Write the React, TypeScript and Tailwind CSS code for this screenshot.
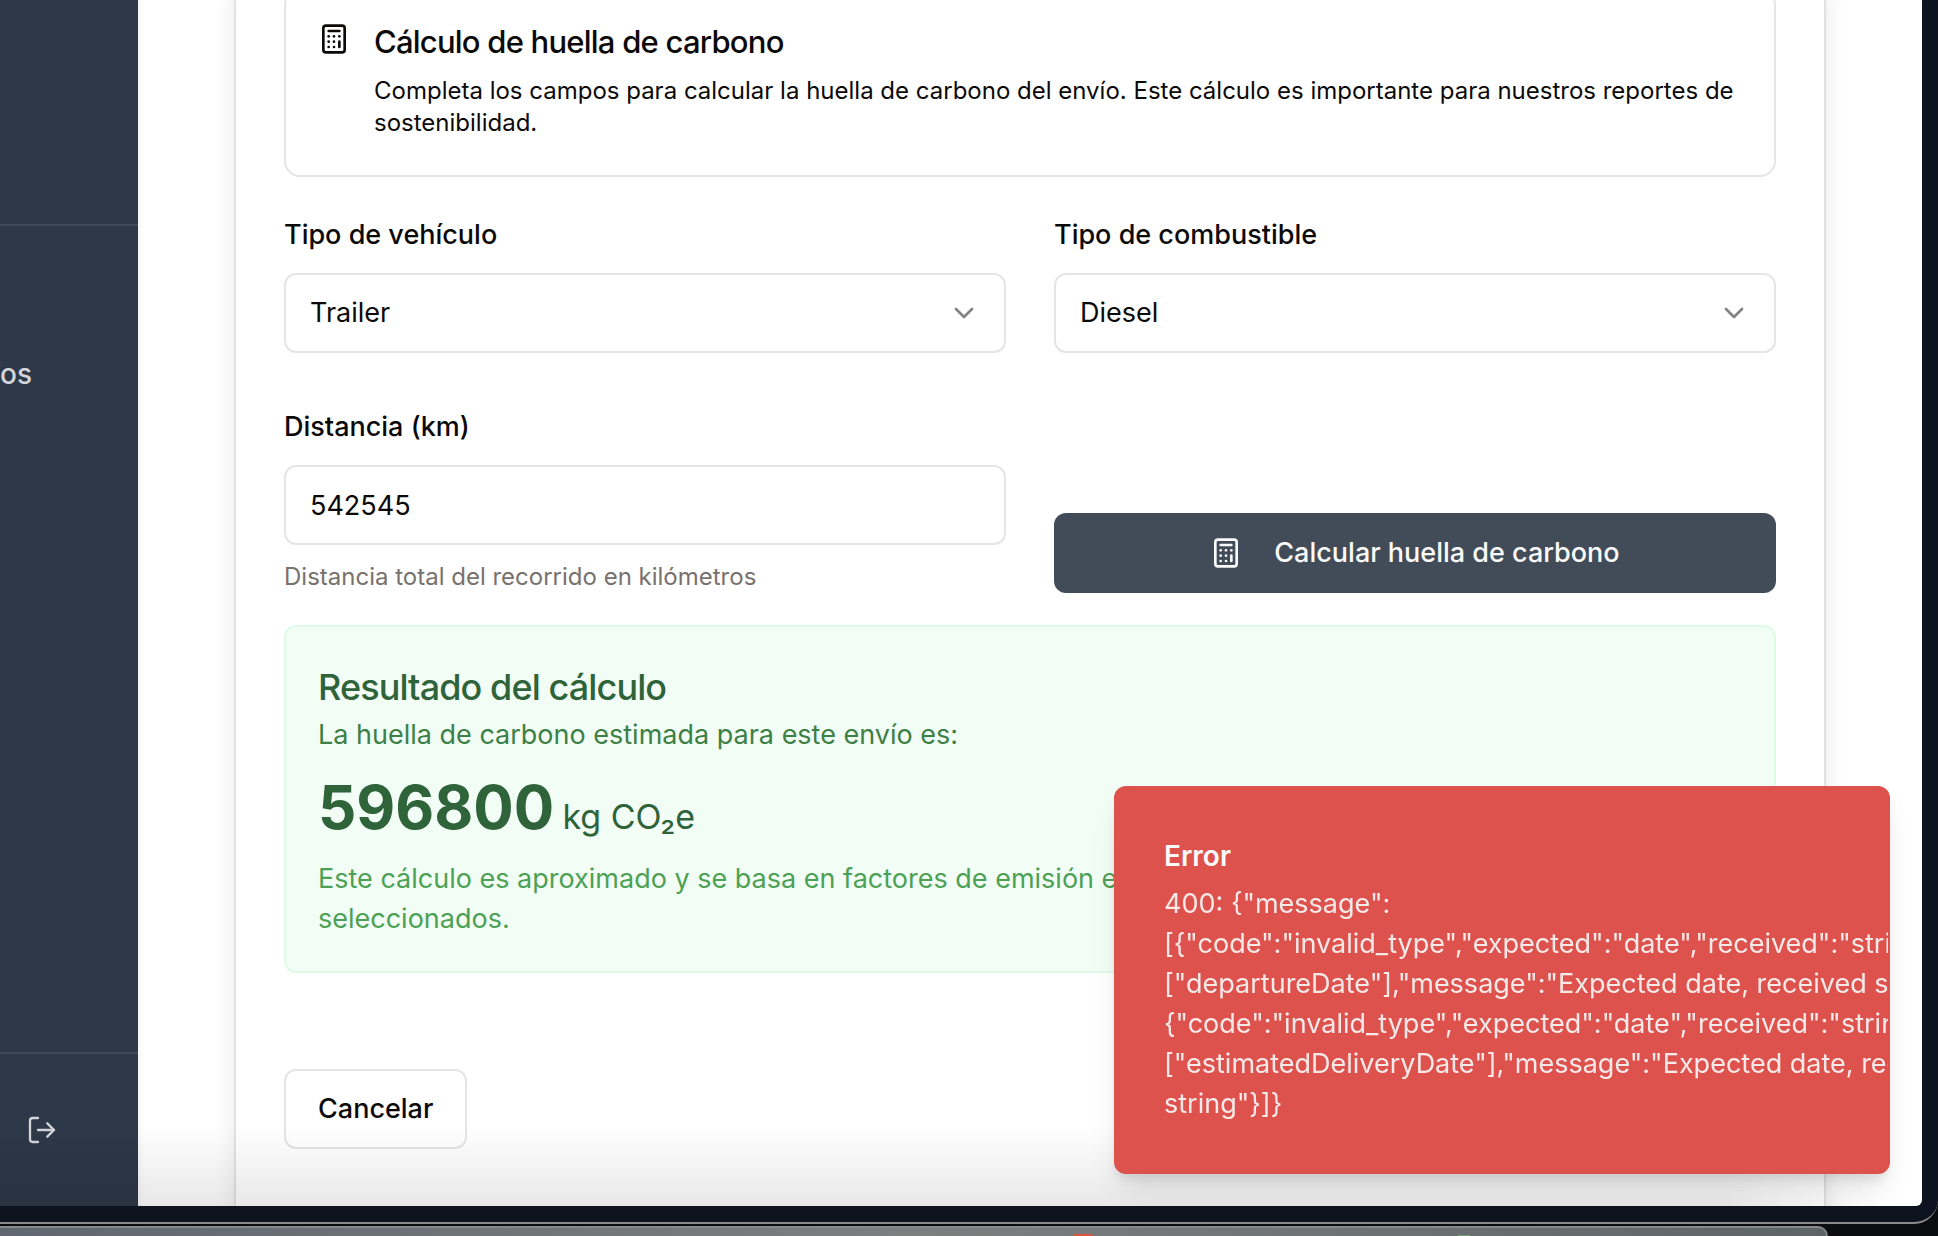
import { useState } from "react";
import { Calculator, ChevronDown, LogOut } from "lucide-react";

const errorLines = [
  '400: {"message":',
  '[{"code":"invalid_type","expected":"date","received":"string","path":',
  '["departureDate"],"message":"Expected date, received string"},',
  '{"code":"invalid_type","expected":"date","received":"string","path":',
  '["estimatedDeliveryDate"],"message":"Expected date, received',
  'string"}]}',
];

function Sidebar() {
  return (
    <aside className="flex w-[138px] shrink-0 flex-col bg-[#2d3848] text-[28px] leading-10 text-[#d3d5d9]">
      <div className="h-[226px] shrink-0 border-b-2 border-[#3f4a5a]" />
      <nav className="flex flex-1 flex-col pt-32">
        <a href="#" className="flex w-8 justify-end font-medium">
          íos
        </a>
      </nav>
      <div className="flex h-[154px] shrink-0 items-center border-t-2 border-[#3f4a5a] px-[26px]">
        <button type="button" aria-label="Cerrar sesión">
          <LogOut className="size-8" strokeWidth={1.75} />
        </button>
      </div>
    </aside>
  );
}

function SelectField({ id, label, options }: { id: string; label: string; options: string[] }) {
  return (
    <div className="flex flex-col gap-5">
      <label htmlFor={id} className="leading-9 font-medium">
        {label}
      </label>
      <div className="relative">
        <select
          id={id}
          className="h-20 w-full appearance-none rounded-xl border-2 border-[#e5e5e5] bg-white px-6"
        >
          {options.map((o) => (
            <option key={o}>{o}</option>
          ))}
        </select>
        <ChevronDown className="pointer-events-none absolute top-6 right-[26px] size-8 opacity-50" />
      </div>
    </div>
  );
}

function InfoCard() {
  return (
    <section className="-mt-[11px] flex gap-6 rounded-2xl border-2 border-[#e5e5e5] px-8 pt-8 pb-9">
      <Calculator className="size-8 shrink-0" />
      <div>
        <h2 className="text-[31px] leading-[38px] font-medium tracking-tight">Cálculo de huella de carbono</h2>
        <p className="mt-3.5 text-2xl leading-8">
          Completa los campos para calcular la huella de carbono del envío. Este cálculo es importante para
          nuestros reportes de sostenibilidad.
        </p>
      </div>
    </section>
  );
}

function Result() {
  return (
    <section className="mt-8 rounded-xl border-2 border-[#e0fae8] bg-[#f2fdf5] p-8">
      <h3 className="text-4xl leading-[56px] font-medium tracking-tight text-[#2f633a]">Resultado del cálculo</h3>
      <p className="text-[#3d8046]">La huella de carbono estimada para este envío es:</p>
      <p className="mt-4 text-[60px] leading-[72px] font-bold text-[#2f633a]">
        596800 <span className="-ml-1.5 text-[34px] leading-10 font-normal">kg CO₂e</span>
      </p>
      <p className="mt-4 text-[#4da155]">
        Este cálculo es aproximado y se basa en factores de emisión estándar para el vehículo y combustible
        seleccionados.
      </p>
    </section>
  );
}

function Toast() {
  return (
    <div
      role="alert"
      className="absolute right-8 bottom-8 w-[776px] overflow-hidden rounded-xl border-2 border-[#dd524c] bg-[#dd524c] p-12 text-[27px] leading-10 text-[#fafafa] shadow-[0_20px_30px_-6px_rgba(0,0,0,0.1),0_8px_12px_-4px_rgba(0,0,0,0.1)]"
    >
      <p className="text-[28px] leading-10 font-semibold">Error</p>
      <div className="mt-2 whitespace-pre opacity-90">
        {errorLines.map((line, i) => (
          <p key={i}>{line}</p>
        ))}
      </div>
    </div>
  );
}

export default function App() {
  const [distance, setDistance] = useState("542545");
  return (
    <div className="flex h-screen flex-col overflow-hidden bg-[#0b0d10] font-['Inter',sans-serif] text-[#0c0a09] antialiased">
      <div className="min-h-0 flex-1 overflow-hidden rounded-br-[24px] border-b-2 border-[#8b8b8b] bg-[#0e1320] pr-4 pb-4">
        <div className="relative flex h-full overflow-hidden rounded-br-md bg-white">
          <Sidebar />
          <main className="h-full min-w-0 flex-1 px-24 text-[27px] leading-10 shadow-[inset_6px_0_8px_-6px_rgba(0,0,0,0.08)]">
            <form
              onSubmit={(e) => e.preventDefault()}
              className="min-h-[120vh] border-x-2 border-[#e2e2e2] bg-white px-12 shadow-[0_0_20px_rgba(0,0,0,0.09)]"
            >
              <InfoCard />
              <div className="mt-10 grid grid-cols-2 gap-x-12 gap-y-14">
                <SelectField id="vehicle" label="Tipo de vehículo" options={["Trailer"]} />
                <SelectField id="fuel" label="Tipo de combustible" options={["Diesel"]} />
                <div className="flex flex-col">
                  <label htmlFor="distance" className="mb-5 leading-9 font-medium">
                    Distancia (km)
                  </label>
                  <input
                    id="distance"
                    value={distance}
                    onChange={(e) => setDistance(e.target.value)}
                    className="mb-4 h-20 w-full rounded-xl border-2 border-[#e5e5e5] bg-white px-6"
                  />
                  <p className="text-2xl leading-8 text-[#78716c]">Distancia total del recorrido en kilómetros</p>
                </div>
                <button
                  type="button"
                  className="flex h-20 items-center justify-center gap-8 self-end rounded-xl bg-[#414c58] font-medium text-[#fafafa]"
                >
                  <Calculator className="size-8" />
                  Calcular huella de carbono
                </button>
              </div>
              <Result />
              <button
                type="button"
                className="mt-24 h-20 rounded-xl border-2 border-[#e5e5e5] bg-white px-8 font-medium"
              >
                Cancelar
              </button>
            </form>
          </main>
          <div className="pointer-events-none absolute inset-x-0 bottom-0 h-20 bg-linear-to-t from-black/9 to-transparent mask-r-from-90% mask-r-to-98%" />
          <Toast />
        </div>
      </div>
      <div className="mt-0.5 mr-[110px] flex h-2.5 shrink-0 items-end gap-[365px] overflow-hidden rounded-tr-[24px] border-t-2 border-r-2 border-[#85898b] bg-linear-to-r from-[#5f6770] via-[#7c7f7e] to-[#5d6468] pl-[1073px]">
        <span className="h-0.5 w-5 rounded-t-full bg-[#dd5240]" />
        <span className="h-px w-3 bg-[#7ba36f]" />
      </div>
    </div>
  );
}
